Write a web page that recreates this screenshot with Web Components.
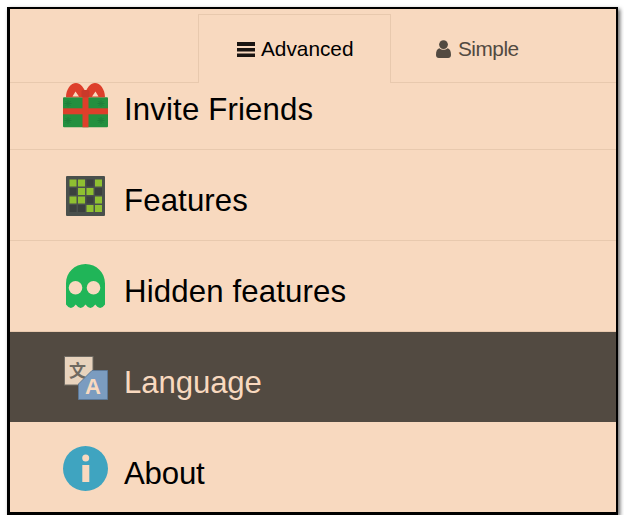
<!DOCTYPE html>
<html>
<head>
<meta charset="utf-8">
<title>Settings menu</title>
<style>
  html, body { margin: 0; background: #fff; }
  body { font-family: "Liberation Sans", Arial, sans-serif; }
</style>
</head>
<body>
<template id="panel-tpl">
  <style>
    :host {
      display: block;
      box-sizing: border-box;
      width: 611px;
      height: 508px;
      margin: 7px 0 0 7px;
      border-style: solid;
      border-color: #000;
      border-width: 2px 2px 3px 3px;
      background: #f8d9bf;
      box-shadow: 2px 2px 4px rgba(0,0,0,.6);
      overflow: hidden;
    }
  </style>
  <slot></slot>
</template>

<template id="tabs-tpl">
  <style>
    :host {
      display: flex;
      box-sizing: border-box;
      height: 74px;
      padding: 5px 0 0 188px;
      border-bottom: 1px solid #e8c9ae;
    }
  </style>
  <slot></slot>
</template>

<template id="tab-tpl">
  <style>
    :host {
      display: flex;
      align-items: center;
      gap: 7px;
      box-sizing: border-box;
      height: 69px;
      padding: 0 38px 0 44px;
      border: 1px solid transparent;
      border-bottom: 0;
      font-size: 20.8px;
      color: #524a41;
    }
    :host([active]) {
      width: 193px;
      gap: 6px;
      padding: 0 0 0 38px;
      border-color: #e8c9ae;
      color: #000;
      background: #f8d9bf;
    }
    ::slotted(svg) { display: block; flex: none; }
  </style>
  <slot name="icon"></slot>
  <slot></slot>
</template>

<template id="row-tpl">
  <style>
    :host {
      display: flex;
      box-sizing: border-box;
      height: 91px;
      padding: 23px 0 0 53px;
      border-bottom: 1px solid #e8c9ae;
      font-size: 31.2px;
      color: #000;
    }
    :host([first]) { height: 67px; padding-top: 0; }
    :host([last]) { border-bottom: 0; height: 90px; padding-top: 24px; }
    :host([selected]) { background: #524a41; color: #f8d9bf; border-bottom: 0; height: 90px; }
    .icon { width: 45px; height: 45px; flex: none; }
    .label { margin: 5px 0 0 16px; line-height: 45px; }
    :host([first]) .label { margin-top: 4px; }
    ::slotted(svg) { display: block; }
  </style>
  <div class="icon"><slot name="icon"></slot></div>
  <div class="label"><slot></slot></div>
</template>

<settings-panel>
  <mode-tabs>
    <mode-tab active>
      <svg slot="icon" width="18" height="15" viewBox="0 0 18 15"><path d="M0 0h18v4H0zM0 6h18v3.500H0zM0 11.500h18V15H0z" fill="#1a1512"/></svg>
      Advanced
    </mode-tab>
    <mode-tab style="letter-spacing:-.5px">
      <svg slot="icon" width="15" height="18" viewBox="0 0 15 18"><circle cx="7.500" cy="4.600" r="4.400" fill="#524a41"/><path d="M0 15c0-4 1.200-6.300 3.500-6.800C4.600 9.200 6 9.700 7.500 9.700s2.900-.5 4-1.500C13.800 8.700 15 11 15 15c0 2-1.200 3-2.800 3H2.800C1.200 18 0 17 0 15z" fill="#524a41"/></svg>
      Simple
    </mode-tab>
  </mode-tabs>

  <menu-row first style="letter-spacing:.14px">
    <svg slot="icon" width="45" height="45" viewBox="0 0 45 45">
      <rect x="0" y="14.300" width="45" height="30" rx="1" fill="#23903f"/>
      <g stroke="#1e7f3a" stroke-width="1" fill="none">
        <path d="M5 17v7M1.500 20.500h7M2.500 18l5 5M7.500 18l-5 5"/>
        <path d="M38 17v7M34.500 20.500h7M35.500 18l5 5M40.500 18l-5 5"/>
        <path d="M5 34v7M1.500 37.500h7M2.500 35l5 5M7.500 35l-5 5"/>
        <path d="M38 34v7M34.500 37.500h7M35.500 35l5 5M40.500 35l-5 5"/>
      </g>
      <rect x="0" y="25.300" width="45" height="6" fill="#dd3f2b"/>
      <rect x="19.500" y="14" width="6" height="30.300" fill="#dd3f2b"/>
      <path fill-rule="evenodd" fill="#dd3f2b" d="M3 14.300C3 6 8 0 13 0c4.500 0 7 4 8.500 7h2C25 4 27.500 0 32 0c5 0 10 6 10 14.300zM9.500 13.500H16L12.500 8.500zM35.500 13.500H29L32.500 8.500z"/>
      <rect x="18.500" y="7" width="8" height="7.300" rx="1.500" fill="#c9392a"/>
    </svg>
    Invite Friends
  </menu-row>

  <menu-row style="letter-spacing:.12px">
    <svg slot="icon" width="45" height="45" viewBox="0 0 45 45">
      <rect x="3" y="3" width="39" height="40" rx="1" fill="#4a504c"/>
      <g fill="#8fc031">
        <rect x="6.500" y="6.500" width="7" height="7"/><rect x="15" y="6.500" width="7" height="7"/><rect x="32" y="6.500" width="7" height="7"/>
        <rect x="15" y="15" width="7" height="7"/><rect x="23.500" y="15" width="7" height="7"/>
        <rect x="6.500" y="23.500" width="7" height="7"/><rect x="15" y="23.500" width="7" height="7"/><rect x="32" y="23.500" width="7" height="7"/>
        <rect x="23.500" y="32" width="7" height="7"/><rect x="32" y="32" width="7" height="7"/>
      </g>
      <g fill="#3b403e">
        <rect x="23.500" y="6.500" width="7" height="7"/>
        <rect x="6.500" y="15" width="7" height="7"/><rect x="32" y="15" width="7" height="7"/>
        <rect x="23.500" y="23.500" width="7" height="7"/>
        <rect x="6.500" y="32" width="7" height="7"/><rect x="15" y="32" width="7" height="7"/>
      </g>
    </svg>
    Features
  </menu-row>

  <menu-row style="letter-spacing:.13px">
    <svg slot="icon" width="45" height="45" viewBox="0 0 45 45">
      <path d="M3 19.500C3 8.500 11.500 0 22.500 0S42 8.500 42 19.500V40.500q-4.875 7-9.750 0q-4.875 7-9.750 0q-4.875 7-9.750 0q-4.875 7-9.750 0z" fill="#20b558"/>
      <circle cx="12.500" cy="23.700" r="6.800" fill="#f8d9bf"/>
      <circle cx="30.500" cy="23.700" r="6.800" fill="#f8d9bf"/>
    </svg>
    Hidden features
  </menu-row>

  <menu-row selected style="letter-spacing:-.12px">
    <svg slot="icon" width="45" height="45" viewBox="0 0 45 45">
      <rect x="1.500" y="1.500" width="28.500" height="28.500" fill="#e8d3bd" stroke="#6f6a62"/>
      <text x="14.500" y="22" font-size="17" font-weight="700" text-anchor="middle" fill="#6f6a62" font-family="'Noto Sans CJK SC', sans-serif">文</text>
      <path d="M29 15.500h15.500V44.500H15.500V29z" fill="#7b9cc0" stroke="#5d7896"/>
      <text x="30" y="39" font-size="22" font-weight="700" text-anchor="middle" fill="#f8d9bf" font-family="'Liberation Sans', sans-serif">A</text>
    </svg>
    Language
  </menu-row>

  <menu-row last style="letter-spacing:-.2px">
    <svg slot="icon" width="45" height="45" viewBox="0 0 45 45">
      <circle cx="22.500" cy="22.500" r="22.500" fill="#3fa4c0"/>
      <circle cx="22.700" cy="12" r="3.500" fill="#f8d9bf"/>
      <rect x="19.300" y="19" width="7" height="17" fill="#f8d9bf"/>
    </svg>
    About
  </menu-row>
</settings-panel>

<script>
  function makeElement(name, tplId) {
    class El extends HTMLElement {
      constructor() {
        super();
        const tpl = document.getElementById(tplId);
        this.attachShadow({ mode: 'open' }).appendChild(tpl.content.cloneNode(true));
      }
    }
    customElements.define(name, El);
  }
  makeElement('settings-panel', 'panel-tpl');
  makeElement('mode-tabs', 'tabs-tpl');
  makeElement('mode-tab', 'tab-tpl');
  makeElement('menu-row', 'row-tpl');
</script>
</body>
</html>
